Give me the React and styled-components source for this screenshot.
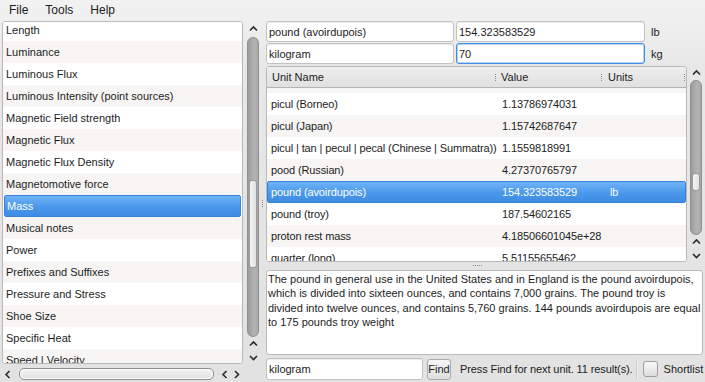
import React from 'react';
import styled, { createGlobalStyle } from 'styled-components';

const categories = [
  'Length',
  'Luminance',
  'Luminous Flux',
  'Luminous Intensity (point sources)',
  'Magnetic Field strength',
  'Magnetic Flux',
  'Magnetic Flux Density',
  'Magnetomotive force',
  'Mass',
  'Musical notes',
  'Power',
  'Prefixes and Suffixes',
  'Pressure and Stress',
  'Shoe Size',
  'Specific Heat',
  'Speed | Velocity',
];

// alt: row has the grey stripe; first row is scrolled out of view
const units = [
  { name: '', value: '', alt: true },
  { name: 'picul (Borneo)', value: '1.13786974031' },
  { name: 'picul (Japan)', value: '1.15742687647', alt: true },
  { name: 'picul | tan | pecul | pecal (Chinese | Summatra))', value: '1.1559818991' },
  { name: 'pood (Russian)', value: '4.27370765797', alt: true },
  { name: 'pound (avoirdupois)', value: '154.323583529', unit: 'lb', selected: true },
  { name: 'pound (troy)', value: '187.54602165' },
  { name: 'proton rest mass', value: '4.18506601045e+28', alt: true },
  { name: 'quarter (long)', value: '5.51155655462' },
];

const GlobalStyle = createGlobalStyle`
  html, body {
    margin: 0;
    padding: 0;
  }
  body {
    width: 705px;
    height: 382px;
    overflow: hidden;
    font-family: "Liberation Sans", Arial, sans-serif;
    font-size: 11px;
    color: #1c1c1c;
    background: linear-gradient(#f2f2f2 0px, #e7e7e7 70px, #e2e2e2 100%);
  }
`;

const Window = styled.div`
  width: 705px;
  height: 382px;
  display: flex;
  flex-direction: column;
`;

const MenuBar = styled.div`
  height: 20px;
  display: flex;
  align-items: center;
  gap: 17px;
  padding-left: 9px;
  font-size: 12px;
  color: #202020;
`;

const Main = styled.div`
  display: flex;
  height: 362px;
  padding: 1px 2px 0 2px;
  box-sizing: border-box;
`;

const LeftPane = styled.div`
  width: 258px;
  flex-shrink: 0;
  display: flex;
  flex-direction: column;
`;

const ListRow = styled.div`
  display: flex;
  height: 343px;
`;

const ListBox = styled.div`
  width: 241px;
  flex-shrink: 0;
  box-sizing: border-box;
  background: #fff;
  border: 1px solid #b9b9b9;
  border-radius: 3px;
  overflow: hidden;
`;

const Scrolled = styled.div`
  margin-top: ${p => p.$offset}px;
`;

const ListItem = styled.div`
  height: 22px;
  line-height: 22px;
  padding-left: 3px;
  white-space: nowrap;
  box-sizing: border-box;
  background: ${p => (p.$alt ? '#f6f5f4' : '#fff')};

  ${p => p.$selected && `
    margin: 0 1px;
    padding-left: 2px;
    color: #fff;
    background: linear-gradient(#6fb3f7, #4a97ea 55%, #3e8ce3);
    border: 1px solid #3a82d6;
    border-radius: 2px;
    line-height: 20px;
  `}
`;

const ScrollBar = styled.div`
  width: 14px;
  flex-shrink: 0;
  margin-left: ${p => p.$gap}px;
  display: flex;
  flex-direction: column;
  align-items: center;
`;

const ArrowBox = styled.div`
  height: ${p => p.$h}px;
  display: flex;
  align-items: center;
  justify-content: center;
`;

const Groove = styled.div`
  flex: 1;
  width: 12px;
  box-sizing: border-box;
  border: 1px solid #8f8f8f;
  border-radius: 6px;
  background: linear-gradient(90deg, #9c9c9c, #b3b3b3 60%, #a9a9a9);
  display: flex;
  flex-direction: column;
  align-items: center;
`;

const Handle = styled.div`
  margin-top: ${p => p.$top}px;
  height: ${p => p.$h}px;
  width: 8px;
  box-sizing: border-box;
  border: 1px solid #9a9a9a;
  border-radius: 3px;
  background: linear-gradient(90deg, #f4f4f4, #e2e2e2);
`;

const HScroll = styled.div`
  height: 16px;
  margin-top: 2px;
  display: flex;
  align-items: center;
`;

const HGroove = styled.div`
  width: 195px;
  height: 12px;
  margin: 0 5px 0 6px;
  box-sizing: border-box;
  border: 1px solid #8e8e8e;
  border-radius: 5px;
  background: linear-gradient(#f3f3f3, #e1e1e1);
  box-shadow: inset 0 0 0 1px #fbfbfb;
`;

const HArrow = styled.div`
  width: ${p => p.$w}px;
  display: flex;
  justify-content: center;
`;

const VSplitter = styled.div`
  width: 6px;
  flex-shrink: 0;
  display: flex;
  align-items: center;
  justify-content: center;
  padding-top: 4px;
`;

const Dots = styled.div`
  width: ${p => (p.$horizontal ? '9px' : '1px')};
  height: ${p => (p.$horizontal ? '1px' : '7px')};
  ${p => (p.$horizontal ? 'border-top' : 'border-left')}: 1px dotted #8a8a8a;
`;

const RightPane = styled.div`
  flex: 1;
  min-width: 0;
  display: flex;
  flex-direction: column;
`;

const EditRow = styled.div`
  display: flex;
  align-items: center;
  height: 21px;
  margin-bottom: 1px;
`;

const LineEdit = styled.div`
  width: ${p => p.$w}px;
  height: ${p => p.$h || 21}px;
  margin-left: ${p => p.$ml || 0}px;
  flex-shrink: 0;
  box-sizing: border-box;
  background: #fff;
  border: 1px solid ${p => (p.$focus ? '#3d8ee2' : '#c2c2c2')};
  border-radius: 3px;
  padding-left: 2px;
  display: flex;
  align-items: center;
  white-space: nowrap;
  box-shadow: ${p => (p.$focus ? 'inset 0 0 0 1px #b8d6f4' : 'inset 0 1px 1px #ececec')};
`;

const UnitLabel = styled.div`
  margin-left: 6px;
`;

const TableArea = styled.div`
  display: flex;
  height: 196px;
  margin-top: 1px;
`;

const Table = styled.div`
  width: 421px;
  flex-shrink: 0;
  box-sizing: border-box;
  border: 1px solid #b9b9b9;
  border-radius: 3px;
  background: #fff;
  display: flex;
  flex-direction: column;
  overflow: hidden;
`;

const Header = styled.div`
  height: 20px;
  flex-shrink: 0;
  display: grid;
  grid-template-columns: 230px 106px 1fr;
  background: linear-gradient(#eeeeee, #e0e0e0);
  border-bottom: 1px solid #b4b4b4;
`;

const HeaderCell = styled.div`
  display: flex;
  align-items: center;
  justify-content: space-between;
  padding-left: ${p => p.$pl}px;
  color: #222;
`;

const HeaderText = styled.span`
  flex: 1;
  padding-left: ${p => p.$pl}px;
`;

const TableBody = styled.div`
  flex: 1;
  overflow: hidden;
`;

const TableRow = styled.div`
  height: 22px;
  display: grid;
  grid-template-columns: 230px 106px 1fr;
  align-items: center;
  box-sizing: border-box;
  white-space: nowrap;
  letter-spacing: -0.12px;
  background: ${p => (p.$alt ? '#f6f5f4' : '#fff')};

  ${p => p.$selected && `
    color: #fff;
    background: linear-gradient(#6fb3f7, #4a97ea 55%, #3e8ce3);
    border: 1px solid #3a82d6;
    border-radius: 2px;
    grid-template-columns: 229px 106px 1fr;
  `}
`;

const Cell = styled.div`
  padding-left: ${p => p.$pl}px;
  overflow: hidden;
`;

const HSplitter = styled.div`
  height: 8px;
  display: flex;
  justify-content: center;
  align-items: center;
  padding-right: 14px;
`;

const Description = styled.div`
  height: 85px;
  box-sizing: border-box;
  background: #fff;
  border: 1px solid #b9b9b9;
  border-radius: 3px;
  padding: 1px 0 0 1px;
  line-height: 14.4px;
  white-space: nowrap;
  overflow: hidden;
`;

const BottomRow = styled.div`
  display: flex;
  align-items: center;
  height: 22px;
  margin-top: 3px;
`;

const FindButton = styled.div`
  width: 24px;
  height: 21px;
  margin-left: 4px;
  flex-shrink: 0;
  box-sizing: border-box;
  border: 1px solid #a9a9a9;
  border-radius: 3px;
  background: linear-gradient(#f7f7f7, #dedede);
  display: flex;
  align-items: center;
  justify-content: center;
`;

const Status = styled.div`
  margin-left: 9px;
  white-space: nowrap;
  letter-spacing: -0.1px;
`;

const Separator = styled.div`
  width: 1px;
  height: 20px;
  margin-left: 3px;
  flex-shrink: 0;
  background: #c9c9c9;
  box-shadow: 1px 0 0 #f2f2f2;
`;

const CheckBox = styled.div`
  width: 15px;
  height: 16px;
  margin-left: 6px;
  flex-shrink: 0;
  box-sizing: border-box;
  border: 1px solid #9d9d9d;
  border-radius: 3px;
  background: linear-gradient(#fafafa, #dcdcdc);
`;

const CheckLabel = styled.div`
  margin-left: 6px;
  white-space: nowrap;
`;

const Chevron = ({ dir }) => {
  const pts = {
    up: '1,5.5 4.5,2 8,5.5',
    down: '1,2 4.5,5.5 8,2',
    left: '5.5,1 2,4.5 5.5,8',
    right: '2,1 5.5,4.5 2,8',
  }[dir];
  const flat = dir === 'up' || dir === 'down';
  return (
    <svg width={flat ? 9 : 8} height={flat ? 8 : 9} viewBox={flat ? '0 0 9 8' : '0 0 8 9'}>
      <polyline points={pts} fill="none" stroke="#2b2b2b" strokeWidth="1.6" />
    </svg>
  );
};

const VScroll = ({ gap, top, h, topArrow }) => (
  <ScrollBar $gap={gap}>
    <ArrowBox $h={topArrow}>
      <Chevron dir="up" />
    </ArrowBox>
    <Groove>
      <Handle $top={top} $h={h} />
    </Groove>
    <ArrowBox $h={14}>
      <Chevron dir="up" />
    </ArrowBox>
    <ArrowBox $h={13}>
      <Chevron dir="down" />
    </ArrowBox>
  </ScrollBar>
);

const App = () => {
  return (
    <>
      <GlobalStyle />
      <Window>
        <MenuBar>
          <span>File</span>
          <span>Tools</span>
          <span>Help</span>
        </MenuBar>
        <Main>
          <LeftPane>
            <ListRow>
              <ListBox>
                <Scrolled $offset={-3}>
                  {categories.map((c, i) => (
                    <ListItem key={c} $alt={i % 2 === 1} $selected={c === 'Mass'}>
                      {c}
                    </ListItem>
                  ))}
                </Scrolled>
              </ListBox>
              <VScroll gap={3} top={142} h={88} topArrow={16} />
            </ListRow>
            <HScroll>
              <HArrow $w={11}>
                <Chevron dir="left" />
              </HArrow>
              <HGroove />
              <HArrow $w={12}>
                <Chevron dir="left" />
              </HArrow>
              <HArrow $w={12}>
                <Chevron dir="right" />
              </HArrow>
            </HScroll>
          </LeftPane>
          <VSplitter>
            <Dots />
          </VSplitter>
          <RightPane>
            <EditRow>
              <LineEdit $w={188}>pound (avoirdupois)</LineEdit>
              <LineEdit $w={189} $ml={2}>154.323583529</LineEdit>
              <UnitLabel>lb</UnitLabel>
            </EditRow>
            <EditRow>
              <LineEdit $w={188}>kilogram</LineEdit>
              <LineEdit $w={189} $ml={2} $focus>70</LineEdit>
              <UnitLabel>kg</UnitLabel>
            </EditRow>
            <TableArea>
              <Table>
                <Header>
                  <HeaderCell $pl={5}>
                    <HeaderText $pl={0}>Unit Name</HeaderText>
                    <Dots />
                  </HeaderCell>
                  <HeaderCell $pl={0}>
                    <HeaderText $pl={4}>Value</HeaderText>
                    <Dots />
                  </HeaderCell>
                  <HeaderCell $pl={0}>
                    <HeaderText $pl={5}>Units</HeaderText>
                    <Dots />
                  </HeaderCell>
                </Header>
                <TableBody>
                  <Scrolled $offset={-17}>
                    {units.map((u, i) => (
                      <TableRow key={i} $alt={u.alt} $selected={u.selected}>
                        <Cell $pl={u.selected ? 3 : 4}>{u.name}</Cell>
                        <Cell $pl={5}>{u.value}</Cell>
                        <Cell $pl={7}>{u.unit}</Cell>
                      </TableRow>
                    ))}
                  </Scrolled>
                </TableBody>
              </Table>
              <VScroll gap={2} top={92} h={18} topArrow={14} />
            </TableArea>
            <HSplitter>
              <Dots $horizontal />
            </HSplitter>
            <Description>
              The pound in general use in the United States and in England is the pound avoirdupois,
              <br />
              which is divided into sixteen ounces, and contains 7,000 grains. The pound troy is
              <br />
              divided into twelve ounces, and contains 5,760 grains. 144 pounds avoirdupois are equal
              <br />
              to 175 pounds troy weight
            </Description>
            <BottomRow>
              <LineEdit $w={157} $h={22}>kilogram</LineEdit>
              <FindButton>Find</FindButton>
              <Status>Press Find for next unit. 11 result(s).</Status>
              <Separator />
              <CheckBox />
              <CheckLabel>Shortlist</CheckLabel>
            </BottomRow>
          </RightPane>
        </Main>
      </Window>
    </>
  );
};

export default App;
